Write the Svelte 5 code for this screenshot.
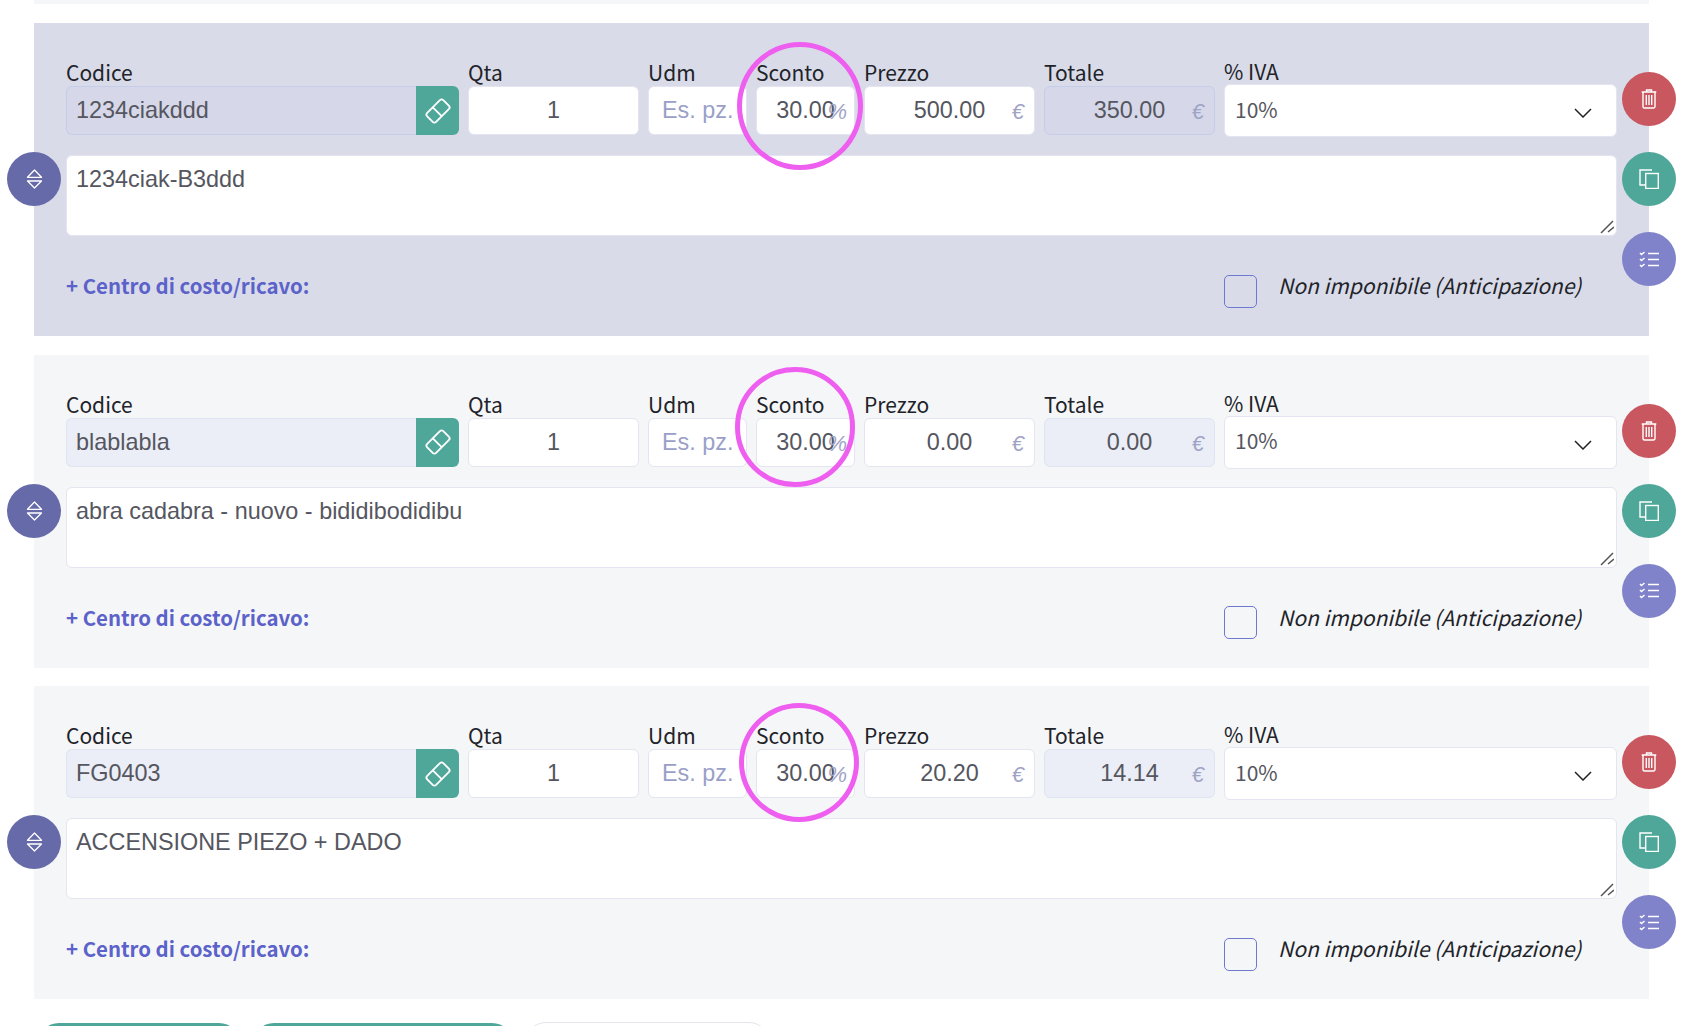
<script lang="ts">
	const rows = [
		{ code: '1234ciakddd', desc: '1234ciak-B3ddd', price: '500.00', total: '350.00', selected: true, ring: { left: 703, top: 19, w: 126, h: 128 } },
		{ code: 'blablabla', desc: 'abra cadabra - nuovo - bididibodidibu', price: '0.00', total: '0.00', selected: false, ring: { left: 701, top: 12, w: 120, h: 120 } },
		{ code: 'FG0403', desc: 'ACCENSIONE PIEZO + DADO', price: '20.20', total: '14.14', selected: false, ring: { left: 705, top: 17, w: 120, h: 119 } },
	];
</script>

<div class="page">
	<div class="strip"></div>

	{#each rows as row}
		<section class="card" class:selected={row.selected}>
			<div class="fields">
				<div class="field">
					<span class="label">Codice</span>
					<div class="code-group">
						<input class="box locked code" value={row.code} disabled />
						<button class="eraser" type="button" aria-label="Cancella codice">
							<svg viewBox="0 0 24 24" width="26" height="26" fill="none" stroke="#fff" stroke-width="1.7" stroke-linejoin="round">
								<g transform="rotate(-45 12 12)">
									<rect x="1.5" y="6.2" width="21" height="11.6" rx="2.2" />
									<line x1="11" y1="6.2" x2="11" y2="17.8" />
								</g>
							</svg>
						</button>
					</div>
				</div>
				<div class="field">
					<span class="label">Qta</span>
					<input class="box num" value="1" />
				</div>
				<div class="field">
					<span class="label">Udm</span>
					<input class="box udm" placeholder="Es. pz." />
				</div>
				<div class="field">
					<span class="label">Sconto</span>
					<div class="suffixed">
						<input class="box num" value="30.00" />
						<span class="suffix percent">%</span>
					</div>
				</div>
				<div class="field">
					<span class="label">Prezzo</span>
					<div class="suffixed">
						<input class="box num" value={row.price} />
						<span class="suffix">€</span>
					</div>
				</div>
				<div class="field">
					<span class="label">Totale</span>
					<div class="suffixed">
						<input class="box num locked" value={row.total} disabled />
						<span class="suffix">€</span>
					</div>
				</div>
				<div class="field iva">
					<span class="label">% IVA</span>
					<div class="select">
						<span>10%</span>
						<svg viewBox="0 0 18 10" width="18" height="10" fill="none" stroke="#222" stroke-width="1.5">
							<path d="M1 1l8 8 8-8" />
						</svg>
					</div>
				</div>
			</div>

			<div class="desc-wrap">
				<textarea class="desc" value={row.desc}></textarea>
				<svg class="grip" viewBox="0 0 14 14" width="14" height="14" stroke="#555" stroke-width="1.5">
					<path d="M1 13L13 1M8 12l6-5" />
				</svg>
			</div>

			<div class="footer">
				<span class="cost-link">+ Centro di costo/ricavo:</span>
				<div class="exempt">
					<span class="check"></span>
					<span class="exempt-text">Non imponibile (Anticipazione)</span>
				</div>
			</div>

			<button class="round sort" type="button" aria-label="Ordina">
				<svg viewBox="0 0 17 20" width="17" height="20" fill="none" stroke="#fff" stroke-width="1.3" stroke-linejoin="round">
					<path d="M8.5 1L15.5 8.3H1.5zM1.5 12H15.5L8.5 19z" />
				</svg>
			</button>
			<button class="round trash" type="button" aria-label="Elimina">
				<svg viewBox="0 0 16 20" width="16" height="20" fill="none" stroke="#fff" stroke-width="1.4">
					<path d="M5.5 2.6V1h5v1.6M.7 3h14.6M2 3v14.5a1.5 1.5 0 0 0 1.5 1.5h9a1.5 1.5 0 0 0 1.5-1.5V3M5.3 6v10M8 6v10M10.7 6v10" />
				</svg>
			</button>
			<button class="round copy" type="button" aria-label="Duplica">
				<svg viewBox="0 0 20 20" width="20" height="20" fill="none" stroke="#fff" stroke-width="1.4">
					<path d="M13 1H1v15h5" />
					<rect x="6.7" y="4.5" width="12.6" height="15" />
				</svg>
			</button>
			<button class="round list" type="button" aria-label="Dettagli">
				<svg viewBox="0 0 20 17" width="20" height="17" fill="none" stroke="#fff" stroke-width="1.5">
					<path d="M9 2.5h11M9 8.5h11M9 14.5h11" />
					<path d="M1 2l1.5 1.5L5.5 1M1 8l1.5 1.5L5.5 7M1 14l1.5 1.5L5.5 13" />
				</svg>
			</button>

			<span class="ring" style="left:{row.ring.left}px;top:{row.ring.top}px;width:{row.ring.w}px;height:{row.ring.h}px"></span>
		</section>
	{/each}

	<div class="actions">
		<span class="pill teal first"></span>
		<span class="pill teal second"></span>
		<span class="pill ghost"></span>
	</div>
</div>

<style>
	:global(body) {
		margin: 0;
		background: #fff;
	}

	.page {
		height: 1026px;
		overflow: hidden;
		font-family: "Noto Sans CJK SC", "Noto Sans", sans-serif;
		color: #212329;
	}

	.strip {
		height: 4px;
		margin: 0 47px 19px 34px;
		background: #f5f6f8;
	}

	.card {
		--locked: #ebeef6;
		--locked-border: #e0e3f1;
		position: relative;
		box-sizing: border-box;
		width: 1615px;
		height: 313px;
		margin: 0 0 18.5px 34px;
		padding: 37px 0 0 32px;
		background: #f5f6f8;
	}

	.card.selected {
		--locked: #d6d8e9;
		--locked-border: #c5cdeb;
		background: #d9dbe8;
	}

	.fields {
		display: grid;
		grid-template-columns: 393px 171px 99px 99px 171px 171px 393px;
		grid-template-rows: 75px;
		gap: 9px;
		width: 1551px;
	}

	.field {
		display: flex;
		flex-direction: column;
		min-width: 0;
	}

	.label {
		flex: none;
		height: 26px;
		font-size: 21px;
		line-height: 24px;
	}

	.box {
		box-sizing: border-box;
		flex: none;
		width: 100%;
		height: 49px;
		margin: 0;
		padding: 0 9px;
		border: 1px solid #e4e5f0;
		border-radius: 6px;
		background: #fff;
		color: #555660;
		font-family: "Liberation Sans", Arial, sans-serif;
		font-size: 23.4px;
		outline: none;
	}

	.box.locked {
		border-color: var(--locked-border);
		background: var(--locked);
		opacity: 1;
	}

	.box::placeholder {
		color: #9a9fc8;
		opacity: 1;
	}

	.udm {
		padding-left: 13px;
	}

	.num {
		text-align: center;
	}

	.code-group {
		display: flex;
	}

	.code {
		flex: 1;
		min-width: 0;
		border-right: 0;
		border-radius: 6px 0 0 6px;
	}

	.eraser {
		display: flex;
		flex: none;
		align-items: center;
		justify-content: center;
		width: 43px;
		height: 49px;
		padding: 0;
		border: 0;
		border-radius: 0 6px 6px 0;
		background: #4fa79a;
	}

	.suffixed {
		position: relative;
	}

	.suffix {
		position: absolute;
		top: 14px;
		right: 11px;
		color: #a0a3c6;
		font-family: "Liberation Sans", Arial, sans-serif;
		font-size: 22px;
		font-style: italic;
		line-height: 24px;
	}

	.suffix.percent {
		right: 8px;
	}

	.iva {
		margin-top: -2px;
	}

	.iva .label {
		line-height: 26px;
	}

	.select {
		display: flex;
		flex: none;
		align-items: center;
		justify-content: space-between;
		box-sizing: border-box;
		height: 53px;
		padding: 0 24px 0 10px;
		border: 1px solid #e4e5f0;
		border-radius: 6px;
		background: #fff;
		color: #555660;
		font-size: 21px;
	}

	.select span {
		margin-top: -4px;
	}

	.select svg {
		margin-top: 5px;
	}

	.desc-wrap {
		position: relative;
		width: 1551px;
		height: 81px;
		margin-top: 20px;
	}

	.desc {
		display: block;
		box-sizing: border-box;
		width: 100%;
		height: 81px;
		margin: 0;
		padding: 10px 9px;
		border: 1px solid #e4e5f0;
		border-radius: 6px;
		background: #fff;
		color: #555660;
		font-family: "Liberation Sans", Arial, sans-serif;
		font-size: 23.4px;
		line-height: 27px;
		outline: none;
		resize: none;
	}

	.grip {
		position: absolute;
		right: 3px;
		bottom: 2px;
	}

	.footer {
		display: grid;
		grid-template-columns: 1158px 1fr;
		align-items: center;
		width: 1551px;
		height: 34px;
		margin-top: 38px;
	}

	.cost-link {
		margin-top: -12px;
		color: #5b62c9;
		font-size: 20.4px;
		font-weight: 600;
		line-height: 26px;
	}

	.exempt {
		display: flex;
		align-items: center;
		gap: 21px;
	}

	.check {
		box-sizing: border-box;
		flex: none;
		width: 33px;
		height: 33px;
		border: 1px solid #6f78cf;
		border-radius: 5px;
	}

	.exempt-text {
		margin-top: -12px;
		font-size: 21px;
		font-style: italic;
		line-height: 26px;
	}

	.round {
		position: absolute;
		display: flex;
		align-items: center;
		justify-content: center;
		width: 54px;
		height: 54px;
		padding: 0;
		border: 0;
		border-radius: 50%;
	}

	.sort {
		top: 129px;
		left: -27px;
		background: #666aa8;
	}

	.trash {
		top: 49px;
		right: -27px;
		background: #c9575f;
	}

	.copy {
		top: 129px;
		right: -27px;
		background: #4fa79a;
	}

	.list {
		top: 209px;
		right: -27px;
		background: #8083c9;
	}

	.ring {
		position: absolute;
		box-sizing: border-box;
		border: 5px solid #ee5ff0;
		border-radius: 50%;
		pointer-events: none;
	}

	.actions {
		display: flex;
		align-items: flex-start;
		margin: 24px 0 0 38px;
	}

	.pill {
		box-sizing: border-box;
		height: 42px;
		border-radius: 21px;
	}

	.teal {
		background: #4fa79a;
	}

	.first {
		width: 202px;
	}

	.second {
		width: 260px;
		margin-left: 13px;
	}

	.ghost {
		width: 245px;
		margin: -1px 0 0 12px;
		border: 1px solid #e4e5f0;
		background: #fff;
	}
</style>
